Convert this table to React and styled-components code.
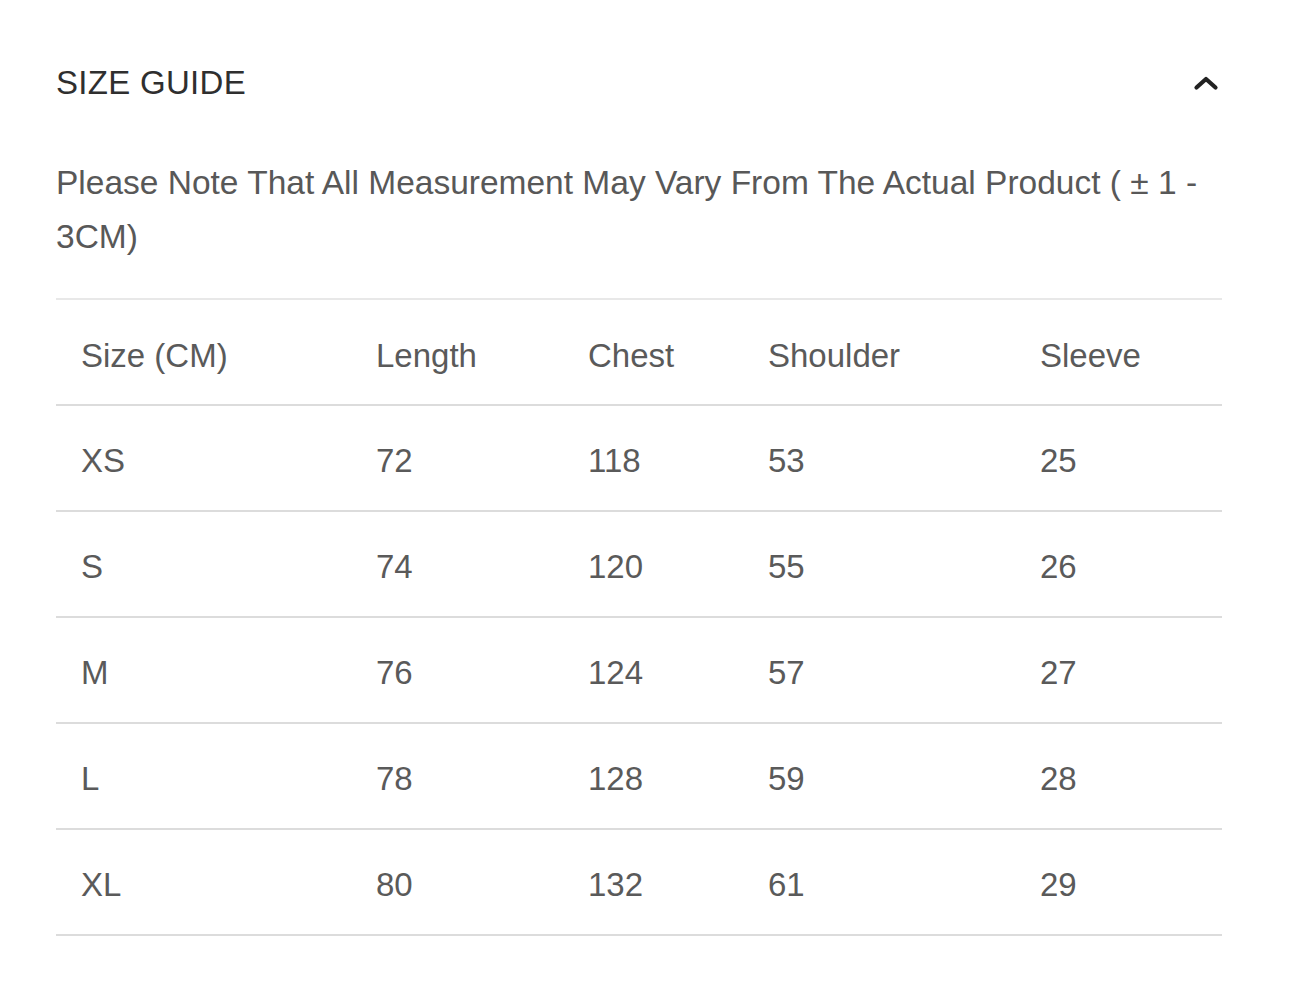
import React from 'react';
import styled, { createGlobalStyle } from 'styled-components';

const GlobalStyle = createGlobalStyle`
  body {
    margin: 0;
    background: #fff;
    font-family: "Liberation Sans", Arial, sans-serif;
  }
`;

const Page = styled.div`
  width: 1166px;
  padding: 57px 0 0 56px;
`;

const Header = styled.div`
  display: flex;
  align-items: center;
  justify-content: space-between;
  height: 52px;
`;

const Title = styled.h2`
  margin: 0;
  font-size: 33px;
  font-weight: 400;
  color: #2f2f2f;
  letter-spacing: 0.3px;
`;

const Toggle = styled.button`
  display: flex;
  align-items: center;
  justify-content: center;
  width: 40px;
  height: 40px;
  margin-right: -4px;
  padding: 0;
  border: none;
  background: none;
  cursor: pointer;
`;

const Note = styled.p`
  margin: 47px 0 0;
  font-size: 33.5px;
  line-height: 54px;
  color: #585858;
`;

const Table = styled.div`
  margin-top: 34px;
  border-top: 2px solid #e8e8e8;
`;

const Row = styled.div`
  display: grid;
  grid-template-columns: 295px 212px 180px 272px 1fr;
  height: 104px;
  align-items: center;
  border-bottom: 2px solid #dcdcdc;
`;

const Cell = styled.div`
  padding-left: 25px;
  font-size: 33px;
  color: #5a5a5a;
  padding-top: ${(p) => (p.$head ? '7px' : '6px')};
`;

const headers = ['Size (CM)', 'Length', 'Chest', 'Shoulder', 'Sleeve'];
const rows = [
  ['XS', 72, 118, 53, 25],
  ['S', 74, 120, 55, 26],
  ['M', 76, 124, 57, 27],
  ['L', 78, 128, 59, 28],
  ['XL', 80, 132, 61, 29],
];

export default function App() {
  return (
    <>
      <GlobalStyle />
      <Page>
        <Header>
          <Title>SIZE GUIDE</Title>
          <Toggle aria-label="Collapse">
            <svg width="26" height="18" viewBox="0 0 26 18">
              <path d="M3.5 13.5 L13 5 L22.5 13.5" fill="none" stroke="#222" strokeWidth="4.2" strokeLinecap="round" strokeLinejoin="round" />
            </svg>
          </Toggle>
        </Header>
        <Note>
          Please Note That All Measurement May Vary From The Actual Product ( ± 1 - 3CM)
        </Note>
        <Table>
          <Row>
            {headers.map((h) => (
              <Cell key={h} $head>{h}</Cell>
            ))}
          </Row>
          {rows.map((r) => (
            <Row key={r[0]}>
              {r.map((v, i) => (
                <Cell key={i}>{v}</Cell>
              ))}
            </Row>
          ))}
        </Table>
      </Page>
    </>
  );
}
